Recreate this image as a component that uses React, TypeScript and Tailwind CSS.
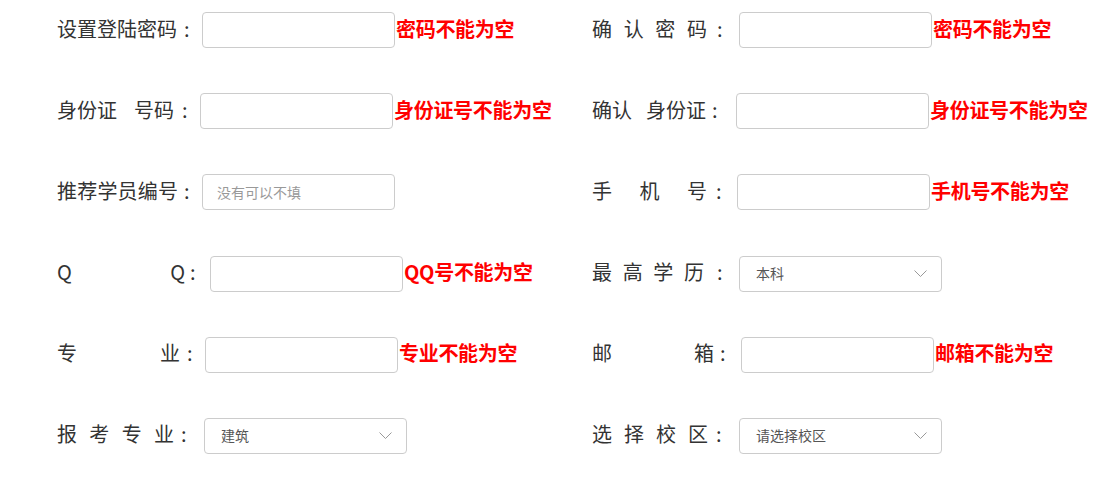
import React from 'react';

type Field = {
    parts: string[];
    charsCls: string;
    colonCls: string;
    labelCls: string;
    kind: 'input' | 'select';
    placeholder?: string;
    value?: string;
    error?: string;
};

// order: left, right, left, right ...
const fields: Field[] = [
    { parts: ['设', '置', '登', '陆', '密', '码'], charsCls: 'w-[120px]', colonCls: 'ml-[7px]', labelCls: 'w-[145px]', kind: 'input', error: '密码不能为空' },
    { parts: ['确', '认', '密', '码'], charsCls: 'w-[115px]', colonCls: 'ml-[10px]', labelCls: 'w-[147px]', kind: 'input', error: '密码不能为空' },
    { parts: ['身份证', '号码'], charsCls: 'w-[117px]', colonCls: 'ml-[8px]', labelCls: 'w-[143px]', kind: 'input', error: '身份证号不能为空' },
    { parts: ['确认', '身份证'], charsCls: 'w-[114px]', colonCls: 'ml-[6px]', labelCls: 'w-[144px]', kind: 'input', error: '身份证号不能为空' },
    { parts: ['推', '荐', '学', '员', '编', '号'], charsCls: 'w-[121px]', colonCls: 'ml-[6px]', labelCls: 'w-[145px]', kind: 'input', placeholder: '没有可以不填' },
    { parts: ['手', '机', '号'], charsCls: 'w-[115px]', colonCls: 'ml-[9px]', labelCls: 'w-[145px]', kind: 'input', error: '手机号不能为空' },
    { parts: ['Q', 'Q'], charsCls: 'w-[128px]', colonCls: 'ml-[5px]', labelCls: 'w-[153px]', kind: 'input', error: 'QQ号不能为空' },
    { parts: ['最', '高', '学', '历'], charsCls: 'w-[112px]', colonCls: 'ml-[13px]', labelCls: 'w-[147px]', kind: 'select', value: '本科' },
    { parts: ['专', '业'], charsCls: 'w-[123px]', colonCls: 'ml-[7px]', labelCls: 'w-[148px]', kind: 'input', error: '专业不能为空' },
    { parts: ['邮', '箱'], charsCls: 'w-[122px]', colonCls: 'ml-[6px]', labelCls: 'w-[149px]', kind: 'input', error: '邮箱不能为空' },
    { parts: ['报', '考', '专', '业'], charsCls: 'w-[117px]', colonCls: 'ml-[7px]', labelCls: 'w-[147px]', kind: 'select', value: '建筑' },
    { parts: ['选', '择', '校', '区'], charsCls: 'w-[116px]', colonCls: 'ml-[8px]', labelCls: 'w-[147px]', kind: 'select', value: '请选择校区' },
];

const Chevron = () => (
    <svg width="13" height="8" viewBox="0 0 13 8" fill="none">
        <polyline points="0.5,0.5 6.5,6.5 12.5,0.5" stroke="#999" strokeWidth="1" />
    </svg>
);

const Row: React.FC<{ f: Field }> = ({ f }) => (
    <div className="flex items-center h-[36px]">
        {/* Label */}
        <div className={`flex items-center shrink-0 pb-[3px] text-[20px] text-[#333] ${f.labelCls}`}>
            <div className={`flex justify-between shrink-0 ${f.charsCls}`}>
                {f.parts.map((p, i) => (
                    <span key={i}>{p}</span>
                ))}
            </div>
            <span className={f.colonCls}>:</span>
        </div>

        {/* Control */}
        {f.kind === 'input' ? (
            <div className="w-[193px] h-[36px] shrink-0 border border-[#ccc] rounded-[4px] bg-white flex items-center pl-[14px]">
                {f.placeholder && <span className="text-[14px] text-[#999]">{f.placeholder}</span>}
            </div>
        ) : (
            <div className="w-[203px] h-[36px] shrink-0 border border-[#ccc] rounded-[4px] bg-white flex items-center justify-between pl-[16px] pr-[14px]">
                <span className="text-[14px] text-[#555]">{f.value}</span>
                <Chevron />
            </div>
        )}

        {f.error && (
            <span className="ml-[1px] pb-[3px] text-[20px] font-bold text-[#ff0000] whitespace-nowrap tracking-[-0.3px]">{f.error}</span>
        )}
    </div>
);

export default function App() {
    return (
        <div
            className="w-[1117px] h-[498px] bg-white overflow-hidden"
            style={{ fontFamily: '"Noto Sans CJK SC", "Noto Sans", sans-serif' }}
        >
            <div className="grid grid-cols-[535px_1fr] gap-y-[45.2px] pl-[57px] pt-[12px]">
                {fields.map((f, i) => (
                    <Row key={i} f={f} />
                ))}
            </div>
        </div>
    );
}
